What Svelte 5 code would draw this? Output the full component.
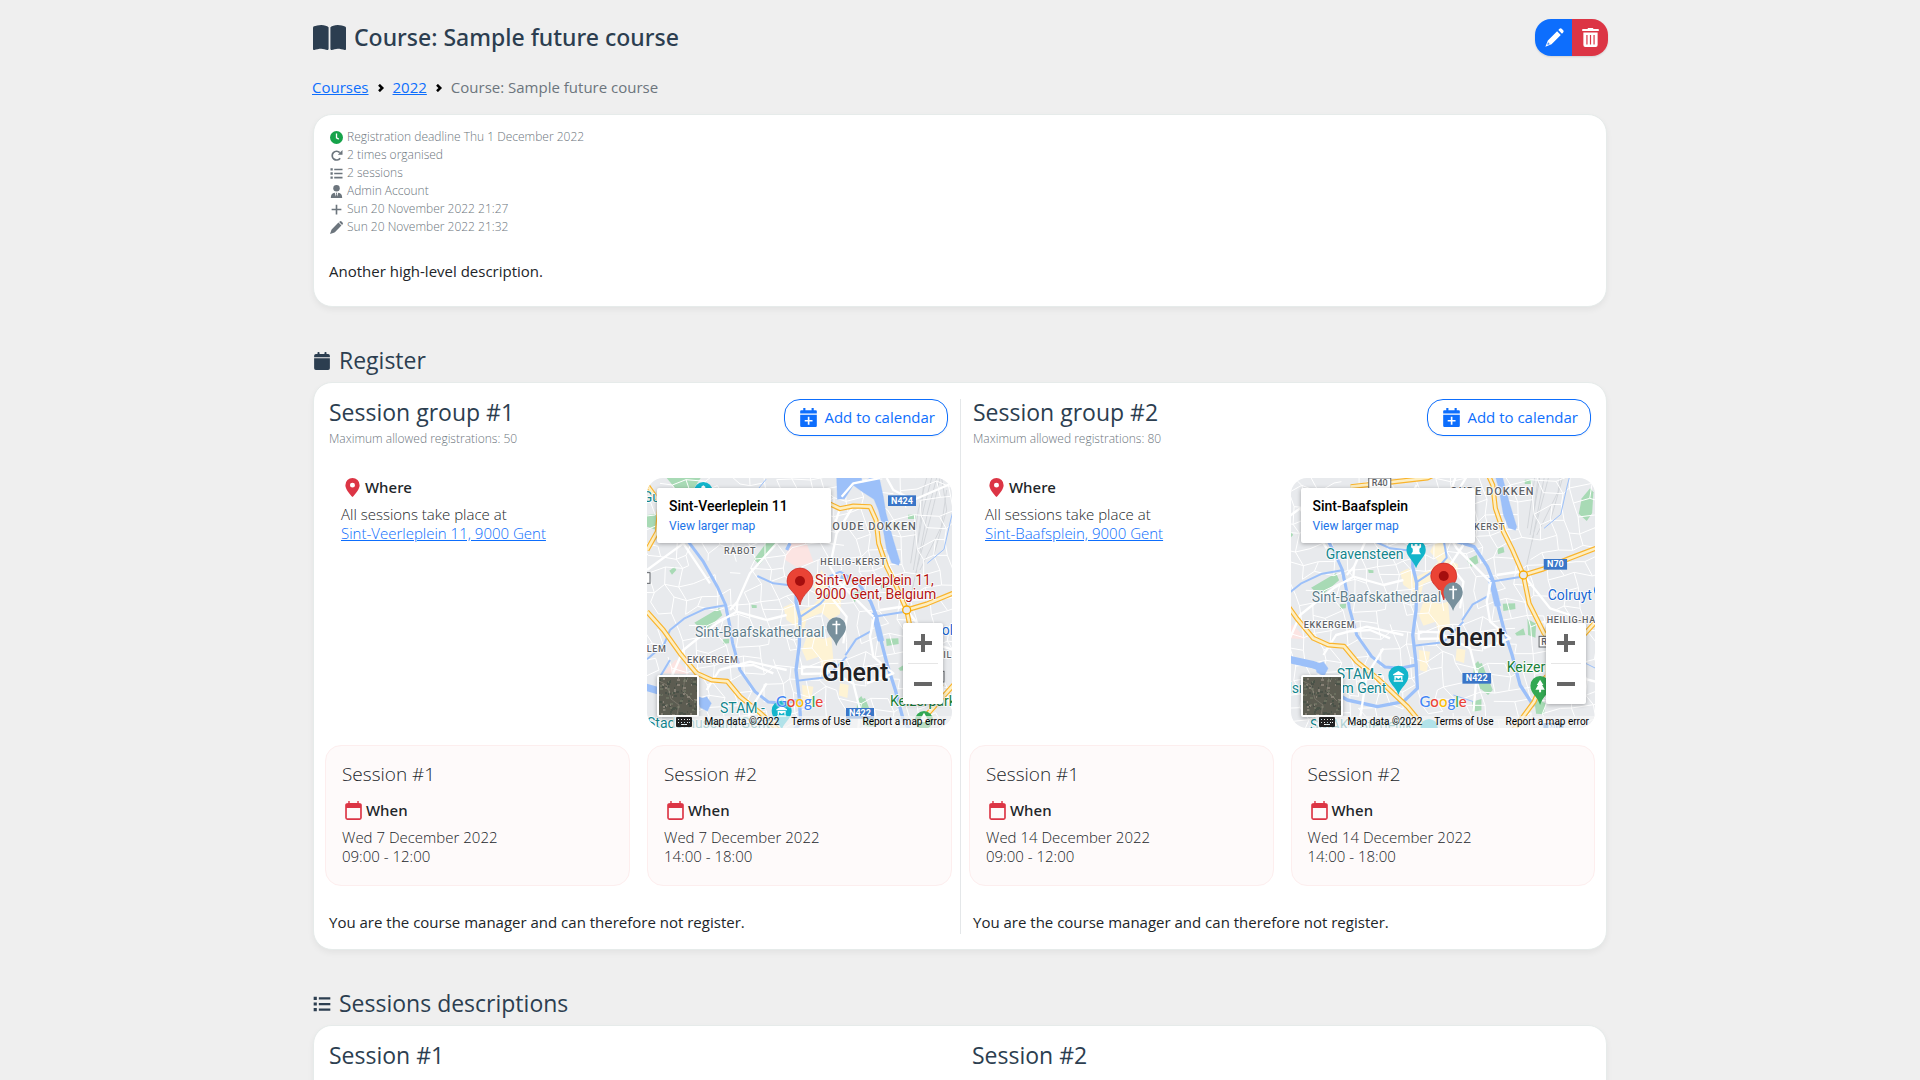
<script>
  const meta = [
    { icon: 'clock', text: 'Registration deadline Thu 1 December 2022' },
    { icon: 'redo', text: '2 times organised' },
    { icon: 'list', text: '2 sessions' },
    { icon: 'user', text: 'Admin Account' },
    { icon: 'plus', text: 'Sun 20 November 2022 21:27' },
    { icon: 'pen', text: 'Sun 20 November 2022 21:32' }
  ];

  const groups = [
    {
      title: 'Session group #1',
      max: 50,
      place: 'Sint-Veerleplein 11',
      view: '21 24 915 750',
      pin: [480, 333],
      day: 'Wed 7 December 2022',
      shields: [[744, 76, 84, 'N424', 'blue'], [618, 714, 84, 'N422', 'blue'], [-24, 308, 54, '', 'box'], [884, 604, 28, '', 'box']],
      labels: [
        ['area big', 577, 180, 'OUDE DOKKEN'],
        ['area', 252, 251, 'RABOT'],
        ['area', 541, 285, 'HEILIG-KERST'],
        ['area', 20, 545, 'LEM'],
        ['area', 141, 578, 'EKKERGEM'],
        ['area', 910, 564, 'IL'],
        ['poi red', 525, 345, 'Sint-Veerleplein 11,'],
        ['poi red', 525, 387, '9000 Gent, Belgium'],
        ['poi slate', 165, 501, 'Sint-Baafskathedraal'],
        ['city', 545, 632, 'Ghent'],
        ['poi teal', 240, 730, 'STAM -'],
        ['poi teal', 21, 774, 'Stadsmuseum Gent'],
        ['poi teal', 8, 96, 'Gui'],
        ['poi green', 750, 708, 'Keizerpark'],
        ['poi shop', 905, 495, 'ol']
      ]
    },
    {
      title: 'Session group #2',
      max: 80,
      place: 'Sint-Baafsplein',
      view: '102 129 915 750',
      pin: [561, 423],
      day: 'Wed 14 December 2022',
      shields: [[336, 129, 66, 'R40', 'box'], [861, 372, 70, 'N70', 'blue'], [617, 714, 86, 'N422', 'blue'], [847, 604, 60, 'R40', 'box'], [860, 864, 60, 'N9', 'blue']],
      labels: [
        ['area big', 580, 180, 'OUDE DOKKEN'],
        ['area', 652, 285, 'KERST'],
        ['area', 141, 578, 'EKKERGEM'],
        ['area', 870, 564, 'HEILIG-HART'],
        ['poi teal', 207, 372, 'Gravensteen'],
        ['poi slate', 165, 501, 'Sint-Baafskathedraal'],
        ['city', 545, 632, 'Ghent'],
        ['poi shop', 873, 495, 'Colruyt'],
        ['poi green', 750, 711, 'Keizerpark'],
        ['poi teal', 240, 732, 'STAM -'],
        ['poi teal', 20, 774, 'Stadsmuseum Gent'],
        ['poi teal', 160, 884, 'SMAK - Stedelijk']
      ]
    }
  ];

  const sessions = [
    { name: 'Session #1', time: '09:00 - 12:00' },
    { name: 'Session #2', time: '14:00 - 18:00' }
  ];

  // Minor streets: a jittered lattice with some of its edges left out.
  function streets() {
    let seed = 11;
    const rnd = () => (seed = (seed * 16807) % 2147483647) / 2147483647;
    const cols = 28;
    const rows = 24;
    const nodes = [];
    for (let r = 0; r < rows; r++) {
      for (let c = 0; c < cols; c++) {
        const skew = r * 9 - 60 + c * 2;
        nodes.push([Math.round(c * 42 + skew + rnd() * 30 - 70), Math.round(r * 42 - c * 7 + rnd() * 28 + 60)]);
      }
    }
    let d = '';
    for (let r = 0; r < rows; r++) {
      for (let c = 0; c < cols; c++) {
        const [x, y] = nodes[r * cols + c];
        if (c + 1 < cols && rnd() < 0.72) d += `M${x} ${y}L${nodes[r * cols + c + 1].join(' ')}`;
        if (r + 1 < rows && rnd() < 0.72) d += `M${x} ${y}L${nodes[(r + 1) * cols + c].join(' ')}`;
      }
    }
    return d;
  }
  const minor = streets();

  // Speckle of the satellite thumbnail.
  const speckles = Array.from({ length: 150 }, (_, i) => ({
    x: (i * 17 + ((i * i) % 13)) % 38,
    y: (i * 29 + ((i * i) % 7)) % 38,
    w: 1 + (i % 3),
    tone: ['#6b6f5f', '#4a5348', '#857f74', '#5a5d52', '#4b5148'][(i * 7 + (i % 4)) % 5]
  }));

  const mainRoads = [
    'M282 155L512 129L570 102L600 116L640 108L690 110L708 150L716 220L740 290L765 340L800 420L817 505L862 595L905 650',
    'M800 420L860 402L936 371L1017 340',
    'M21 425L70 480L120 550L170 610L215 630L262 634L300 680L362 730L452 815L510 885',
    'M21 240L52 185L60 100L21 45',
    'M1017 560L936 650L860 735L832 800L770 885'
  ];

  const parks = [
    'M80 24L182 24L160 58L108 58Z', 'M21 135L48 132L50 180L21 170Z', 'M342 268L378 220L412 220L358 284Z',
    'M163 458L238 414L247 436L200 476L178 472Z', 'M88 302L104 290L109 300L96 314Z', 'M738 506L775 505L776 522L740 528Z',
    'M249 508L268 506L267 520L250 521Z', 'M652 690L664 678L682 712L672 724L650 716Z', 'M804 134L826 134L826 147L804 147Z',
    'M630 374L660 360L665 384L642 396Z', 'M721 340L740 336L743 352L724 358Z', 'M975 190L1000 160L1010 172L1006 235L990 258L966 236Z',
    'M652 692L675 684L708 765L694 780L670 760Z', 'M812 552L838 566L836 608L814 600Z', 'M646 800L674 792L674 826L648 830Z',
    'M832 790L866 804L862 838L838 836Z', 'M775 595L800 580L806 600L780 602Z', 'M334 404L350 406L350 414L336 414Z'
  ];
</script>

{#snippet icon(name)}
  <svg class="icon {name}" viewBox="0 0 16 16" aria-hidden="true">
    {#if name === 'clock'}
      <circle cx="8" cy="8" r="8" /><path d="M8 3.2V8.4L10.8 10" fill="none" stroke="#fff" stroke-width="1.6" />
    {:else if name === 'redo'}
      <path d="M12.5 11.3A5.4 5.4 0 1 1 12 4.4" fill="none" stroke="currentColor" stroke-width="2.1" /><path d="M15.4 1.2V7H9.6Z" />
    {:else if name === 'list'}
      <path d="M.6 1.6H3.4V4.4H.6ZM.6 6.6H3.4V9.4H.6ZM.6 11.6H3.4V14.4H.6ZM5.2 2.1H15.4V4H5.2ZM5.2 7.1H15.4V9H5.2ZM5.2 12.1H15.4V14H5.2Z" />
    {:else if name === 'user'}
      <circle cx="8" cy="4" r="4" /><path d="M1 16Q1 9.6 5.8 9.4L7.2 14L7.6 11L7 9.4H9L8.4 11L8.8 14L10.2 9.4Q15 9.6 15 16Z" />
    {:else if name === 'plus'}
      <path d="M7 2H9V7H14V9H9V14H7V9H2V7H7Z" />
    {:else if name === 'pen'}
      <path d="M10.4 1.9L14.1 5.6L6 13.7Q5.4 14.2 4.7 14.4L0 16L1.6 11.3Q1.8 10.6 2.3 10ZM11.2 1.1L12 .5Q13.1-.4 14.2.6L15.4 1.8Q16.4 2.9 15.5 4L14.9 4.8Z" />
    {:else if name === 'pencil'}
      <path d="M10.2 2.7L13.3 5.8L5.5 13.6L.3 15.7L2.4 10.5ZM11.2 1.7L12.2.7Q13.2-.1 14.1.7L15.3 1.9Q16.1 2.8 15.3 3.8L14.3 4.8Z" /><path class="nick" d="M2.6 11.6L3 13L4.4 13.4L2 14.2Z" />
    {:else if name === 'trash'}
      <path fill-rule="evenodd" d="M5.4.9L6 0H10L10.6.9H14.6Q15 .9 15 1.4V2.6H1V1.4Q1 .9 1.4.9ZM2 3.8H14V14.4Q14 16 12.4 16H3.6Q2 16 2 14.4ZM4.5 5.9V13.9H5.5V5.9ZM7.5 5.9V13.9H8.5V5.9ZM10.5 5.9V13.9H11.5V5.9Z" />
    {:else if name === 'calendar'}
      <path d="M1 5.6H15V14.4Q15 16 13.4 16H2.6Q1 16 1 14.4ZM1 4.7V3.3Q1 1.8 2.6 1.8H4V.4Q4 0 4.5 0H5.3Q5.8 0 5.8.4V1.8H10.2V.4Q10.2 0 10.7 0H11.5Q12 0 12 .4V1.8H13.4Q15 1.8 15 3.3V4.7Z" />
    {:else if name === 'calplus'}
      <path fill-rule="evenodd" d="M1 5.6H15V15Q15 16 14 16H2Q1 16 1 15ZM1 4.6V2.6Q1 1.8 2 1.8H3.6V0H5.4V1.8H10.6V0H12.4V1.8H14Q15 1.8 15 2.6V4.6ZM7.4 7.4V10H4.8V11.4H7.4V14H8.8V11.4H11.4V10H8.8V7.4Z" />
    {:else if name === 'calempty'}
      <path fill-rule="evenodd" d="M3.6 0H4.8V1.6H11.2V0H12.4V1.6Q15 1.6 15 3.4V14.2Q15 16 13.2 16H2.8Q1 16 1 14.2V3.4Q1 1.6 3.6 1.6ZM2.4 5.8V14.6H13.6V5.8Z" />
    {:else if name === 'marker'}
      <path fill-rule="evenodd" d="M8 0A6 6 0 0 1 14 6C14 9.4 10.4 13.4 8 16C5.6 13.4 2 9.4 2 6A6 6 0 0 1 8 0ZM8 3.9A2.1 2.1 0 1 0 8 8.1A2.1 2.1 0 1 0 8 3.9Z" />
    {:else if name === 'chevron'}
      <path d="M4 1.500L10.500 8L4 14.500" fill="none" stroke="currentColor" stroke-width="5" />
    {/if}
  </svg>
{/snippet}

<main class="page">
  <header class="top">
    <h1>
      <svg class="book" viewBox="0 32 576 440" preserveAspectRatio="none" aria-hidden="true">
        <path d="M249.600 471.500c10.800 3.800 22.400-4.100 22.400-15.500V78.600c0-4.200-1.600-8.400-5-11C247.400 52 202.400 32 144 32C93.500 32 46.300 45.300 18.100 56.100C6.800 60.500 0 71.700 0 83.800V454.100c0 11.900 12.800 20.200 24.100 16.500C55.600 460.100 105.500 448 144 448c33.900 0 79 14 105.600 23.500zm76.800 0C353 462 398.100 448 432 448c38.500 0 88.400 12.100 119.900 22.600c11.300 3.800 24.100-4.600 24.100-16.500V83.800c0-12.100-6.800-23.300-18.100-27.600C529.700 45.300 482.500 32 432 32c-58.400 0-103.400 20-123 35.600c-3.300 2.600-5 6.800-5 11V456c0 11.400 11.700 19.300 22.400 15.500z" />
      </svg>
      Course: Sample future course
    </h1>
    <div class="actions">
      <button type="button" class="edit" aria-label="Edit course">{@render icon('pencil')}</button>
      <button type="button" class="delete" aria-label="Delete course">{@render icon('trash')}</button>
    </div>
  </header>

  <nav class="crumbs" aria-label="Breadcrumb">
    <a href="#courses">Courses</a>
    {@render icon('chevron')}
    <a href="#2022">2022</a>
    {@render icon('chevron')}
    <span>Course: Sample future course</span>
  </nav>

  <section class="card summary">
    <ul>
      {#each meta as m}
        <li>{@render icon(m.icon)}<span>{m.text}</span></li>
      {/each}
    </ul>
    <p>Another high-level description.</p>
  </section>

  <h2>{@render icon('calendar')}Register</h2>
  <section class="card register">
    {#each groups as g, gi}
      <div class="group">
        <div class="group-head">
          <div>
            <h3>{g.title}</h3>
            <p class="small">Maximum allowed registrations: {g.max}</p>
          </div>
          <button type="button" class="add">{@render icon('calplus')}Add to calendar</button>
        </div>

        <div class="pair where-row">
          <div class="where">
            <h4>{@render icon('marker')}Where</h4>
            <p>All sessions take place at<br /><a href="#map">{g.place}, 9000 Gent</a></p>
          </div>
          <div class="map">
            <svg class="canvas" viewBox={g.view} preserveAspectRatio="xMidYMid slice" role="img" aria-label="Map of Ghent">
              <rect x="0" y="0" width="1100" height="960" fill="#e8eaed" />
              <g fill="#fce4e2">
                <path d="M433 268L450 220L500 220L520 275L470 292Z" />
                <path d="M70 610L108 568L148 612Z" />
              </g>
              <g fill="#fef3d4">
                <path d="M430 412L456 400L474 428L520 405L545 380L520 350L545 300L560 330L572 372L604 388L600 432L570 450L545 428L500 446L492 480L520 500L552 506L574 500L580 570L552 610L536 560L500 572L486 540L500 500L470 470L440 450Z" />
                <path d="M486 645L520 650L510 712L490 706Z" />
                <path d="M600 640L626 645L622 684L596 676Z" />
              </g>
              <g fill="#a8dab5">
                {#each parks as p}<path d={p} />{/each}
              </g>
              <g class="rail">
                <path d="M860 24L835 120L812 280M875 24L850 120L820 300M890 24L862 130L826 320M900 24L880 110L832 290M920 60L904 170L840 300M850 50L845 120L830 240M905 24L920 120L880 260M830 300L812 380L806 420" />
              </g>
              <path class="minor" d={minor} />
              <g class="water">
                <path class="w8" d="M140 208L190 275L232 350L257 405L270 470L278 520L300 600L345 665L385 696L430 700L478 690" />
                <path class="w10" d="M450 220L440 240M470 320L468 395L480 445L478 525L468 600L478 685L482 760L440 800L362 815L272 795L230 770" />
                <path class="w6" d="M352 318L400 340L468 348M482 440L542 400L570 368L562 322L600 305L630 322" />
                <path class="w10" d="M602 320L652 335L692 395L710 440L720 500L742 585L766 660L790 750L832 815" />
                <path class="w6" d="M702 440L790 426M616 556L648 508L692 484M470 632L560 622L620 560" />
                <path class="w6" d="M21 568L72 524L90 480L132 446L196 416L256 406L262 440M90 570L60 620" />
                <path class="w20" d="M12 650L60 664L110 676L165 688L200 700" />
                <path class="w3" d="M862 280L912 238L932 150L945 100M352 60L378 28M380 210L440 170M590 780L650 800M936 660L1017 700" />
                <path class="fill" d="M590 24L664 24L668 38L690 24L718 24L730 80L738 130L760 210L780 275L776 286L755 278L740 240L728 170L715 120L702 88L668 66L640 46L614 86L592 88Z" />
                <path class="fill" d="M692 430L708 428L722 470L732 512L714 514L704 470Z" />
                <path class="fill" d="M176 690L200 680L214 700L202 724L180 712Z" />
              </g>
              <g class="major">
                <path d="M410 220L330 310L292 395L290 425L230 460L130 540L60 700M292 395L270 420M290 425L380 450L440 435M270 590L340 585L400 610M200 660L238 600L330 575L440 600M640 108L590 190L570 290L600 340L700 440M720 24L640 40L605 80M600 116L585 160M740 24L760 60L820 90L936 40M702 440L690 500L700 560L760 610L680 640M486 590L560 592L560 610L486 612ZM560 600L640 640L660 720L650 830M800 420L880 520L940 540M720 420L800 408M862 560L940 720L1017 740M620 330L580 390L620 440L610 520M21 300L130 220L210 340M440 220L480 150M380 640L330 720L310 850" />
              </g>
              {#each mainRoads as r}<path class="road edge" d={r} />{/each}
              {#each mainRoads as r}<path class="road core" d={r} />{/each}
              <circle cx="800" cy="420" r="12" fill="#e8eaed" stroke="#f9ab00" stroke-width="4" />

              {#if gi === 0}
                <circle cx="190" cy="64" r="28" fill="#12b5cb" /><path d="M184 50L190 46L196 50V60H184Z" fill="#fff" />
                <circle cx="852" cy="750" r="27" fill="#34a853" /><path d="M852 728L868 756H836Z" fill="#fff" />
              {:else}
                <path d="M449 344A29 29 0 0 1 507 344C507 366 486 374 478 400C470 374 449 366 449 344Z" fill="#12b5cb" />
                <path d="M463 327H468V332H474V327H482V332H488V327H493V337L488 341V350L493 358H463L468 350V341L463 337Z" fill="#fff" />
                <path d="M821 752A29 29 0 0 1 879 752C879 776 858 782 850 810C842 782 821 776 821 752Z" fill="#34a853" />
                <path d="M850 734L860 750H856L864 764H853V772H847V764H836L844 750H840Z" fill="#fff" />
                <circle cx="517" cy="878" r="26" fill="#12b5cb" />
                <circle cx="1038" cy="466" r="26" fill="#1a73e8" />
              {/if}
              <path d="M395 722A30 30 0 0 1 455 722C455 746 433 754 425 780C417 754 395 746 395 722Z" fill="#12b5cb" />
              <path d="M409 718L425 708L441 718V721H409ZM411 736H439V740H411ZM413 723H437V734H433V727L425 732L417 727V734H413Z" fill="#fff" />

              <g>
                {#each g.shields as [x, y, w, t, kind]}
                  <rect class="shield {kind}" {x} {y} width={w} height="32" />
                  <text class="shield-text {kind}" x={x + w / 2} y={y + 25}>{t}</text>
                {/each}
              </g>
              <g transform="translate({g.pin[0]} {g.pin[1]})">
                <path d="M-39 0A39 39 0 0 1 39 0C39 28 8 34 0 72C-8 34 -39 28 -39 0Z" fill="#ea4335" stroke="#c5221f" stroke-width="2" />
                <circle r="15" fill="#a50e0e" />
              </g>
              <path d="M560 471A29 29 0 0 1 618 471C618 495 597 502 589 528C581 502 560 495 560 471Z" fill="#78909c" />
              <path d="M587 452H592V461H601V466H592V493H587V466H577V461H587Z" fill="#fff" />
              {#each g.labels as [cls, x, y, t]}
                <text class={cls} {x} {y}>{t}</text>
              {/each}
            </svg>

            <div class="info">
              <strong>{g.place}</strong>
              <a href="#larger-map">View larger map</a>
            </div>
            <div class="zoom">
              <button type="button" aria-label="Zoom in"><svg viewBox="0 0 18 18"><path d="M7 0H11V7H18V11H11V18H7V11H0V7H7Z" /></svg></button>
              <button type="button" aria-label="Zoom out"><svg viewBox="0 0 18 18"><path d="M0 7H18V11H0Z" /></svg></button>
            </div>
            <button type="button" class="satellite" aria-label="Satellite view">
              <svg viewBox="0 0 38 38">
                <rect width="38" height="38" fill="#5c5c51" />
                {#each speckles as s}<rect x={s.x} y={s.y} width={s.w} height="2" fill={s.tone} />{/each}
                <path d="M0 4L8 8L12 22L20 28L18 38M26 0L24 14L34 24" fill="none" stroke="#8c877c" stroke-width="1" opacity=".6" />
              </svg>
            </button>
            <span class="logo" aria-label="Google"><i class="b">G</i><i class="r">o</i><i class="y">o</i><i class="b">g</i><i class="g">l</i><i class="r">e</i></span>
            <div class="legal">
              <svg class="keys" viewBox="0 0 16 10" aria-hidden="true">
                <path fill-rule="evenodd" d="M1 0H15Q16 0 16 1V9Q16 10 15 10H1Q0 10 0 9V1Q0 0 1 0ZM2 2V3H3V2ZM5 2V3H6V2ZM8 2V3H9V2ZM11 2V3H12V2ZM13 2V3H14V2ZM2 5V6H3V5ZM5 5V6H6V5ZM8 5V6H9V5ZM11 5V6H12V5ZM13 5V6H14V5ZM5 7V8H11V7Z" />
              </svg>
              <span>Map data ©2022</span>
              <a href="#terms">Terms of Use</a>
              <a href="#report">Report a map error</a>
            </div>
          </div>
        </div>

        <div class="pair">
          {#each sessions as s}
            <article class="session">
              <h4 class="name">{s.name}</h4>
              <h4>{@render icon('calempty')}When</h4>
              <p>{g.day}<br />{s.time}</p>
            </article>
          {/each}
        </div>
        <p class="note">You are the course manager and can therefore not register.</p>
      </div>
    {/each}
  </section>

  <h2>{@render icon('list')}Sessions descriptions</h2>
  <section class="card descriptions">
    <h3>Session #1</h3>
    <h3>Session #2</h3>
  </section>
</main>

<style>
  :global(body) {
    margin: 0;
    background: #efefef;
  }
  .page {
    box-sizing: border-box;
    display: flex;
    flex-direction: column;
    max-width: 1320px;
    min-height: 100vh;
    margin: 0 auto;
    padding: 16px 12px 0;
    font: 15px/19px 'Open Sans', 'Noto Sans', sans-serif;
    color: #212529;
  }
  h1, h2, h3, h4, p, ul {
    margin: 0;
    padding: 0;
  }
  h1, h2, h3 {
    color: #2c3e50;
    font-weight: 400;
    font-size: 23px;
    line-height: 27px;
  }
  a { color: #0d6efd; }
  button {
    font: inherit;
    cursor: pointer;
    padding: 0;
    border: 0;
  }
  .icon {
    flex: none;
    width: 16px;
    height: 16px;
    fill: currentColor;
  }
  .top {
    display: flex;
    justify-content: space-between;
    align-items: center;
    height: 43px;
  }
  h1 {
    display: flex;
    align-items: center;
    gap: 8px;
    padding-left: 1px;
    font-family: 'Noto Sans', 'Open Sans', sans-serif;
    font-weight: 500;
  }
  .book {
    width: 33px;
    height: 25px;
    fill: currentColor;
  }
  .actions {
    display: flex;
    width: 73px;
    height: 37px;
    border-radius: 16px;
    overflow: hidden;
    box-shadow: 0 1px 2px #00000020;
  }
  .actions button {
    flex: 1;
    display: grid;
    place-items: center;
    padding-left: 2px;
    color: #fff;
  }
  .actions .icon {
    width: 19px;
    height: 19px;
  }
  .edit { background: #0d6efd; }
  .delete { background: #dc3545; }
  .nick { fill: #0d6efd; }
  .crumbs {
    display: flex;
    align-items: center;
    gap: 8px;
    margin: 19px 0 17px;
    color: #6c757d;
  }
  .crumbs .icon {
    width: 8px;
    height: 8px;
    color: #000;
  }
  .card {
    margin: 0 1px;
    padding: 16px 15px 15px;
    background: #fff;
    border: 1px solid #e6ebea;
    border-radius: 19px;
    box-shadow: 0 3px 6px #0000000d;
  }
  .summary ul {
    list-style: none;
    font-size: 12px;
    line-height: 18px;
    font-weight: 300;
    color: #6c757d;
  }
  .summary { padding: 13px 15px 25px; }
  .summary li {
    display: flex;
    align-items: center;
    gap: 4px;
    padding-left: 1px;
  }
  .summary li .icon {
    width: 13px;
    height: 13px;
  }
  .summary .icon.clock { color: #16a34a; }
  .summary p { margin-top: 26px; }
  h2 {
    display: flex;
    align-items: center;
    gap: 8px;
    margin: 40px 0 8px;
    padding-left: 1px;
  }
  h2 .icon {
    width: 18px;
    height: 18px;
  }
  .register {
    display: grid;
    grid-template-columns: 1fr 1fr;
    padding: 16px 11px 15px;
  }
  .group { padding-right: 8px; }
  .group + .group {
    padding: 0 0 0 8px;
    border-left: 1px solid #e4e7e9;
  }
  .group-head {
    display: flex;
    justify-content: space-between;
    align-items: flex-start;
    padding: 0 4px;
  }
  .small {
    margin-top: 4px;
    font-size: 12px;
    line-height: 18px;
    font-weight: 300;
    color: #6c757d;
  }
  .add {
    display: flex;
    align-items: center;
    gap: 6px;
    height: 37px;
    padding: 0 12px 0 14px;
    color: #0d6efd;
    background: #fff;
    border: 1px solid #0d6efd;
    border-radius: 16px;
    box-shadow: 0 1px 2px #00000010;
  }
  .add .icon {
    width: 19px;
    height: 19px;
  }
  .pair {
    display: grid;
    grid-template-columns: 1fr 1fr;
    gap: 17px;
    margin-bottom: 17px;
  }
  .where-row { margin-top: 30px; }
  .where { padding-left: 16px; }
  h4 {
    display: flex;
    align-items: center;
    gap: 3px;
    padding-left: 2px;
    font-family: 'Noto Sans', 'Open Sans', sans-serif;
    font-size: 15px;
    line-height: 19px;
    font-weight: 500;
  }
  h4 .icon {
    width: 19px;
    height: 19px;
    color: #dc3545;
  }
  .where p, .session p {
    margin-top: 8px;
    font-weight: 300;
  }
  .session {
    padding: 16px 16px 19px;
    background: #fefafa;
    border: 1px solid #fdeeee;
    border-radius: 16px;
  }
  h4.name {
    margin-bottom: 15px;
    padding: 0;
    font-family: inherit;
    font-size: 19px;
    line-height: 24px;
    font-weight: 300;
  }
  .note { padding: 10px 4px 2px; }

  .map {
    position: relative;
    height: 250px;
    border-radius: 16px;
    overflow: hidden;
    font-family: Roboto, sans-serif;
    color: #000;
  }
  .canvas {
    display: block;
    width: 100%;
    height: 100%;
  }
  .minor, .major, .rail, .water path, .road {
    fill: none;
    stroke-linejoin: round;
  }
  .minor { stroke: #fff; stroke-width: 3; }
  .major { stroke: #fff; stroke-width: 7; }
  .rail { stroke: #d3d6da; stroke-width: 3; }
  .water path { stroke: #9cc0f9; }
  .water .w3 { stroke-width: 3; }
  .water .w6 { stroke-width: 6; }
  .water .w8 { stroke-width: 9; }
  .water .w10 { stroke-width: 10; }
  .water .w20 { stroke-width: 22; }
  .water .fill { fill: #9cc0f9; }
  .road.edge { stroke: #f9b42d; stroke-width: 15; }
  .road.core { stroke: #fdeec2; stroke-width: 8; }
  .canvas text {
    paint-order: stroke;
    stroke: #fff;
    stroke-width: 5px;
    stroke-linejoin: round;
  }
  .canvas .area {
    font-size: 27px;
    font-weight: 500;
    letter-spacing: 2px;
    fill: #5f6368;
  }
  .canvas .area.big {
    font-size: 33px;
    letter-spacing: 3px;
  }
  .canvas .poi { font-size: 42px; }
  .canvas .red { fill: #b31412; }
  .canvas .slate { fill: #607d8b; }
  .canvas .teal { fill: #12858d; }
  .canvas .green { fill: #188038; }
  .canvas .shop { fill: #1967d2; }
  .canvas .city {
    font-size: 75px;
    font-weight: 500;
    fill: #202124;
  }
  .shield.blue { fill: #3a76c8; }
  .shield.box { fill: #fff; stroke: #5f6368; stroke-width: 3; }
  .canvas .shield-text {
    font-size: 27px;
    font-weight: 700;
    text-anchor: middle;
    stroke: none;
    fill: #fff;
  }
  .canvas .shield-text.box { fill: #5f6368; font-weight: 500; }
  .info {
    position: absolute;
    top: 10px;
    left: 10px;
    box-sizing: border-box;
    width: 174px;
    height: 55px;
    padding: 9px 12px;
    background: #fff;
    border-radius: 2px;
    box-shadow: 0 1px 4px #0000004d;
  }
  .info strong {
    display: block;
    font-size: 14px;
    line-height: 18px;
    font-weight: 500;
  }
  .info a {
    display: block;
    margin-top: 2px;
    font-size: 12px;
    line-height: 18px;
    color: #1a73e8;
    text-decoration: none;
  }
  .zoom {
    position: absolute;
    right: 9px;
    bottom: 24px;
    display: flex;
    flex-direction: column;
    width: 40px;
    height: 81px;
    background: #fff;
    border-radius: 2px;
    box-shadow: 0 1px 4px #0000004d;
  }
  .zoom button {
    flex: 1;
    display: grid;
    place-items: center;
    margin: 0 5px;
    background: none;
  }
  .zoom button + button { border-top: 1px solid #e6e6e6; }
  .zoom svg {
    width: 18px;
    height: 18px;
    fill: #666;
  }
  .satellite {
    position: absolute;
    left: 10px;
    bottom: 11px;
    width: 42px;
    height: 42px;
    border: 2px solid #fff;
    border-radius: 2px;
    box-shadow: 0 1px 4px #0000004d;
  }
  .satellite svg {
    display: block;
    width: 100%;
    height: 100%;
  }
  .logo {
    position: absolute;
    left: 129px;
    bottom: 17px;
    font: 500 15px/20px Lato, sans-serif;
    text-shadow: 0 0 2px #fff, 0 0 2px #fff;
  }
  .logo i { font-style: normal; }
  .logo .b { color: #4285f4; }
  .logo .r { color: #ea4335; }
  .logo .y { color: #fbbc04; }
  .logo .g { color: #34a853; }
  .legal {
    position: absolute;
    right: 0;
    bottom: 0;
    display: flex;
    align-items: center;
    gap: 12px;
    height: 12px;
    padding: 0 6px 0 3px;
    font-size: 10px;
    line-height: 12px;
    white-space: nowrap;
    background: #f5f5f5b3;
  }
  .legal a {
    color: #000;
    text-decoration: none;
  }
  .keys {
    width: 16px;
    height: 10px;
    fill: #222;
  }
  .descriptions {
    flex: 1;
    display: grid;
    grid-template-columns: 1fr 1fr;
    gap: 24px;
    border-bottom: 0;
    border-radius: 19px 19px 0 0;
  }
</style>
